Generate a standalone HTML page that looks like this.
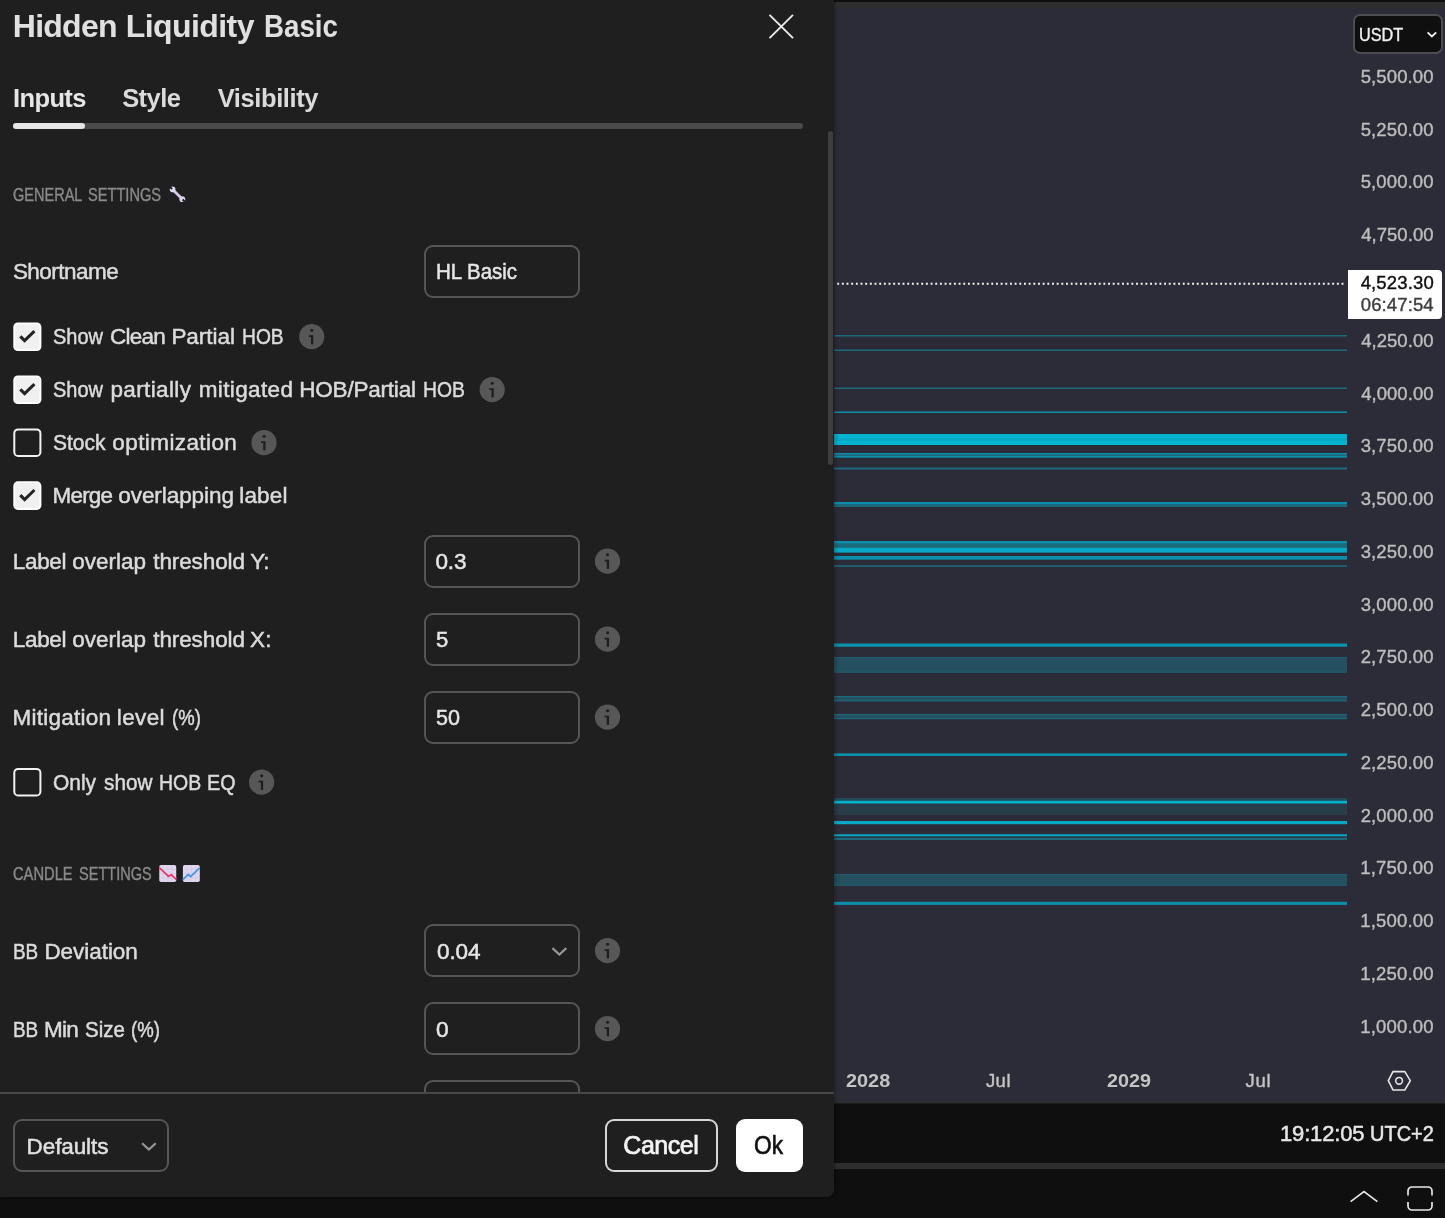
<!DOCTYPE html>
<html><head><meta charset="utf-8"><title>Hidden Liquidity Basic</title>
<style>
*{box-sizing:border-box;margin:0;padding:0}
html,body{width:1445px;height:1218px;overflow:hidden;background:#0f0f0f;font-family:"Liberation Sans",sans-serif;color:#dbdbdb}
.abs{position:absolute}
#page{will-change:transform;position:relative;width:1445px;height:1218px;overflow:hidden;background:#0f0f0f}
#topbar{left:834px;top:2px;width:611px;height:6px;background:#2e2e2e}
#chart{left:834px;top:8px;width:611px;height:1094px;background:#2c2c38}
#sep{left:834px;top:1163px;width:611px;height:6px;background:#2e2e2e}
.ln{position:absolute;left:834px;width:513px}
.pl{position:absolute;left:1361px;width:80px;font-size:18px;line-height:20px;color:#bdbdbd;white-space:nowrap;letter-spacing:.22px}
.tl{position:absolute;top:1070px;font-size:18px;line-height:22px;color:#c4c4c4;white-space:nowrap}
.tl.b{font-weight:bold}
#dlg{left:0;top:0;width:834px;height:1196.5px;background:#1f1f1f;border-bottom-right-radius:8px;overflow:hidden;box-shadow:1px 0 4px rgba(0,0,0,.35)}
.t{position:absolute;white-space:nowrap;line-height:1}
.lbl{color:#dbdbdb}
.sec{color:#808080}
.inp{position:absolute;left:424px;width:155.5px;height:53px;border:2px solid #555;border-radius:9px}
.inp .t{left:11px;top:14.2px;font-size:21px;color:#e0e0e0}
.cb{position:absolute;left:13px;width:28px;height:28px;border-radius:5px}
.cb.on{background:#f0f0f0}
.cb.off{border:2px solid #e6e6e6}
.cb svg{position:absolute;left:0;top:0}
.info{position:absolute;width:25px;height:25px}
</style></head><body>
<div id="page">
<div id="topbar" class="abs"></div>
<div id="chart" class="abs"></div>
<svg class="abs" style="left:834px;top:0" width="513" height="1103" viewBox="0 0 513 1103"><rect x="0" y="335" width="513" height="1.5" fill="#1d6a7d"/><rect x="0" y="349.5" width="513" height="1.5" fill="#1d6a7d"/><rect x="0" y="387.5" width="513" height="1.5" fill="#1d6a7d"/><rect x="0" y="411.5" width="513" height="1.5" fill="#0c8fab"/><rect x="0" y="434" width="513" height="11" fill="#00b4d0"/><rect x="0" y="438.5" width="513" height="2.5" fill="#05a9c5"/><rect x="0" y="453" width="513" height="4.5" fill="#1d6a7d"/><rect x="0" y="453" width="513" height="1.3" fill="#0c8fab"/><rect x="0" y="456" width="513" height="1.5" fill="#0c8fab"/><rect x="0" y="467.5" width="513" height="2.0" fill="#1d6a7d"/><rect x="0" y="502" width="513" height="5" fill="#1d6a7d"/><rect x="0" y="502" width="513" height="2" fill="#0c8fab"/><rect x="0" y="541" width="513" height="11.5" fill="#1b6b7e"/><rect x="0" y="541" width="513" height="2.3" fill="#0c8fab"/><rect x="0" y="547.8" width="513" height="4.7" fill="#06a8c6"/><rect x="0" y="556" width="513" height="3.7" fill="#0c8fab"/><rect x="0" y="565" width="513" height="2" fill="#1f5c6e"/><rect x="0" y="643.5" width="513" height="3.3" fill="#0c8fab"/><rect x="0" y="657" width="513" height="15.7" fill="#24505f"/><rect x="0" y="657" width="513" height="1.2" fill="#1f5c6e"/><rect x="0" y="671.5" width="513" height="1.2" fill="#1f5c6e"/><rect x="0" y="696" width="513" height="5.3" fill="#24505f"/><rect x="0" y="696" width="513" height="1.2" fill="#1d6a7d"/><rect x="0" y="700.2" width="513" height="1.1" fill="#1d6a7d"/><rect x="0" y="714" width="513" height="5.1" fill="#24505f"/><rect x="0" y="714" width="513" height="1.2" fill="#1d6a7d"/><rect x="0" y="718" width="513" height="1.1" fill="#1d6a7d"/><rect x="0" y="753.3" width="513" height="2.7" fill="#0c8fab"/><rect x="0" y="798" width="513" height="17" fill="#293c49"/><rect x="0" y="798" width="513" height="2.8" fill="#234a59"/><rect x="0" y="800.8" width="513" height="2.7" fill="#00b4d0"/><rect x="0" y="821" width="513" height="3.2" fill="#06a8c6"/><rect x="0" y="834.3" width="513" height="2.0" fill="#06a8c6"/><rect x="0" y="837.7" width="513" height="2.3" fill="#1d6a7d"/><rect x="0" y="874" width="513" height="11.8" fill="#24505f"/><rect x="0" y="874" width="513" height="1.2" fill="#1f5c6e"/><rect x="0" y="884.6" width="513" height="1.2" fill="#1f5c6e"/><rect x="0" y="901.8" width="513" height="3.1" fill="#0c8fab"/></svg>
<svg class="abs" style="left:834px;top:280px" width="514" height="8" viewBox="0 0 514 8"><path d="M3.2 3.75 H512" stroke="#f5f5f5" stroke-width="2" stroke-dasharray="1.9 2.77" fill="none"/></svg>
<span class="t" style="left:1360.71px;top:68.00px;font-size:18.5px;color:#bdbdbd;letter-spacing:0.116px;-webkit-text-stroke:0.4px #bdbdbd;">5,500.00</span>
<span class="t" style="left:1360.71px;top:121.00px;font-size:18.5px;color:#bdbdbd;letter-spacing:0.116px;-webkit-text-stroke:0.4px #bdbdbd;">5,250.00</span>
<span class="t" style="left:1360.71px;top:173.00px;font-size:18.5px;color:#bdbdbd;letter-spacing:0.116px;-webkit-text-stroke:0.4px #bdbdbd;">5,000.00</span>
<span class="t" style="left:1361.13px;top:226.00px;font-size:18.5px;color:#bdbdbd;letter-spacing:0.056px;-webkit-text-stroke:0.4px #bdbdbd;">4,750.00</span>
<span class="t" style="left:1361.13px;top:332.00px;font-size:18.5px;color:#bdbdbd;letter-spacing:0.056px;-webkit-text-stroke:0.4px #bdbdbd;">4,250.00</span>
<span class="t" style="left:1361.13px;top:385.00px;font-size:18.5px;color:#bdbdbd;letter-spacing:0.056px;-webkit-text-stroke:0.4px #bdbdbd;">4,000.00</span>
<span class="t" style="left:1360.71px;top:437.00px;font-size:18.5px;color:#bdbdbd;letter-spacing:0.116px;-webkit-text-stroke:0.4px #bdbdbd;">3,750.00</span>
<span class="t" style="left:1360.71px;top:490.00px;font-size:18.5px;color:#bdbdbd;letter-spacing:0.116px;-webkit-text-stroke:0.4px #bdbdbd;">3,500.00</span>
<span class="t" style="left:1360.71px;top:543.00px;font-size:18.5px;color:#bdbdbd;letter-spacing:0.116px;-webkit-text-stroke:0.4px #bdbdbd;">3,250.00</span>
<span class="t" style="left:1360.71px;top:596.00px;font-size:18.5px;color:#bdbdbd;letter-spacing:0.116px;-webkit-text-stroke:0.4px #bdbdbd;">3,000.00</span>
<span class="t" style="left:1360.71px;top:648.00px;font-size:18.5px;color:#bdbdbd;letter-spacing:0.117px;-webkit-text-stroke:0.4px #bdbdbd;">2,750.00</span>
<span class="t" style="left:1360.71px;top:701.00px;font-size:18.5px;color:#bdbdbd;letter-spacing:0.117px;-webkit-text-stroke:0.4px #bdbdbd;">2,500.00</span>
<span class="t" style="left:1360.71px;top:754.00px;font-size:18.5px;color:#bdbdbd;letter-spacing:0.117px;-webkit-text-stroke:0.4px #bdbdbd;">2,250.00</span>
<span class="t" style="left:1360.71px;top:807.00px;font-size:18.5px;color:#bdbdbd;letter-spacing:0.117px;-webkit-text-stroke:0.4px #bdbdbd;">2,000.00</span>
<span class="t" style="left:1360.18px;top:859.00px;font-size:18.5px;color:#bdbdbd;letter-spacing:0.192px;-webkit-text-stroke:0.4px #bdbdbd;">1,750.00</span>
<span class="t" style="left:1360.18px;top:912.00px;font-size:18.5px;color:#bdbdbd;letter-spacing:0.192px;-webkit-text-stroke:0.4px #bdbdbd;">1,500.00</span>
<span class="t" style="left:1360.18px;top:965.00px;font-size:18.5px;color:#bdbdbd;letter-spacing:0.192px;-webkit-text-stroke:0.4px #bdbdbd;">1,250.00</span>
<span class="t" style="left:1360.18px;top:1018.00px;font-size:18.5px;color:#bdbdbd;letter-spacing:0.192px;-webkit-text-stroke:0.4px #bdbdbd;">1,000.00</span>
<div class="abs" style="left:1353px;top:14px;width:90px;height:40px;background:#0f0f0f;border:2px solid #4d4d50;border-radius:7px"></div>
<span class="t" style="left:1358.53px;top:26.00px;font-size:18.5px;color:#f0f0f0;transform-origin:0 50%;transform:scaleX(0.8755);-webkit-text-stroke:0.4px #f0f0f0;">USDT</span>
<svg class="abs" style="left:1425px;top:29px" width="14" height="11" viewBox="0 0 14 11"><path d="M2.6 3.4 L6.9 7.4 L11.2 3.4" fill="none" stroke="#f0f0f0" stroke-width="1.9"/></svg>
<div class="abs" style="left:1348px;top:270px;width:94px;height:49px;background:#fff;border-radius:0 4px 4px 0"></div>
<span class="t" style="left:1360.63px;top:274.00px;font-size:18.5px;color:#0f0f0f;letter-spacing:0.156px;-webkit-text-stroke:0.4px #0f0f0f;">4,523.30</span>
<span class="t" style="left:1360.76px;top:296.00px;font-size:18.5px;color:#3d3d3d;letter-spacing:0.117px;-webkit-text-stroke:0.4px #3d3d3d;">06:47:54</span>
<span class="t" style="left:846.41px;top:1072.00px;font-size:18.5px;color:#c4c4c4;font-weight:bold;transform-origin:0 50%;transform:scaleX(1.0741);">2028</span>
<span class="t" style="left:985.89px;top:1072.00px;font-size:18.5px;color:#c4c4c4;letter-spacing:0.483px;-webkit-text-stroke:0.4px #c4c4c4;">Jul</span>
<span class="t" style="left:1106.51px;top:1072.00px;font-size:18.5px;color:#c4c4c4;font-weight:bold;transform-origin:0 50%;transform:scaleX(1.0686);">2029</span>
<span class="t" style="left:1245.39px;top:1072.00px;font-size:18.5px;color:#c4c4c4;letter-spacing:0.783px;-webkit-text-stroke:0.4px #c4c4c4;">Jul</span>
<svg class="abs" style="left:1385px;top:1068px" width="28" height="26" viewBox="0 0 28 26"><path d="M3.3 12.7 L8 3.6 H19.8 L25.3 12.7 L19.8 21.9 H8 Z" fill="none" stroke="#e6e6e6" stroke-width="1.55" stroke-linejoin="miter"/><circle cx="14.1" cy="12.75" r="3.35" fill="none" stroke="#e6e6e6" stroke-width="1.55"/></svg>
<div class="abs" style="left:834px;top:1102px;width:611px;height:116px;background:#0f0f0f"></div>
<svg class="abs" style="left:834px;top:1100px" width="611" height="6" viewBox="0 0 611 6"><rect x="0" y="1.9" width="611" height="1.5" fill="#2e2e2e"/></svg>
<div id="sep" class="abs"></div>
<span class="t" style="left:1279.97px;top:1123.00px;font-size:22px;color:#e6e6e6;letter-spacing:-0.146px;-webkit-text-stroke:0.5px #e6e6e6;">19:12:05</span> <span class="t" style="left:1370.37px;top:1123.00px;font-size:22px;color:#e6e6e6;transform-origin:0 50%;transform:scaleX(0.9090);-webkit-text-stroke:0.5px #e6e6e6;">UTC+2</span>
<svg class="abs" style="left:1346px;top:1184px" width="36" height="24" viewBox="0 0 36 24"><path d="M4.6 17.6 L18 7.6 L31.4 17.6" fill="none" stroke="#e6e6e6" stroke-width="1.6"/></svg>
<svg class="abs" style="left:1404px;top:1183px" width="32" height="30" viewBox="0 0 32 30"><path d="M4 12.5 V8 a4 4 0 0 1 4-4 H24 a4 4 0 0 1 4 4 V12.5 M4 19 V23 a4 4 0 0 0 4 4 H24 a4 4 0 0 0 4 -4 V19" fill="none" stroke="#e6e6e6" stroke-width="1.7"/></svg>
<div id="dlg" class="abs">
<span class="t" style="left:12.84px;top:10.00px;font-size:32px;color:#e0e0e0;font-weight:bold;letter-spacing:-0.758px;">Hidden</span> <span class="t" style="left:125.74px;top:10.00px;font-size:32px;color:#e0e0e0;font-weight:bold;letter-spacing:-0.567px;">Liquidity</span> <span class="t" style="left:264.13px;top:10.00px;font-size:32px;color:#e0e0e0;font-weight:bold;transform-origin:0 50%;transform:scaleX(0.8663);">Basic</span>
<svg class="abs" style="left:765px;top:10px" width="32" height="32" viewBox="0 0 32 32"><path d="M4.5 4.8 L28 28.2 M28 4.8 L4.5 28.2" fill="none" stroke="#ebebeb" stroke-width="1.9"/></svg>
<span class="t" style="left:13.09px;top:86.00px;font-size:25.5px;color:#e6e6e6;font-weight:bold;letter-spacing:-0.645px;">Inputs</span>
<span class="t" style="left:122.20px;top:86.00px;font-size:25.5px;color:#dbdbdb;font-weight:bold;letter-spacing:-0.575px;">Style</span>
<span class="t" style="left:217.73px;top:86.00px;font-size:25.5px;color:#dbdbdb;font-weight:bold;letter-spacing:-0.403px;">Visibility</span>
<div class="abs" style="left:13px;top:123px;width:790px;height:6px;border-radius:3px;background:#4a4a4a"></div>
<div class="abs" style="left:13px;top:123px;width:72px;height:6px;border-radius:3px;background:#e6e6e6"></div>
<div class="abs" style="left:828px;top:131px;width:5px;height:334px;border-radius:2.5px;background:#3d3d3d"></div>
<span class="t" style="left:13.12px;top:186.00px;font-size:18.5px;color:#8a8a8a;transform-origin:0 50%;transform:scaleX(0.7850);-webkit-text-stroke:0.4px #8a8a8a;">GENERAL</span> <span class="t" style="left:88.02px;top:186.00px;font-size:18.5px;color:#8a8a8a;transform-origin:0 50%;transform:scaleX(0.7897);-webkit-text-stroke:0.4px #8a8a8a;">SETTINGS</span>
<svg class="abs" style="left:168px;top:184px" width="21" height="21" viewBox="0 0 21 21"><g transform="translate(0.00 0.00)"><g stroke-linecap="butt"><path d="M4.4 5.3 L14.4 15.3" stroke="#d6c9ee" stroke-width="2.7"/><circle cx="4.6" cy="5.4" r="2.8" fill="#e3daf3"/><circle cx="14.3" cy="15.2" r="2.9" fill="#dcd0f0"/><path d="M4.1 5 L0.5 1.4" stroke="#1f1f1f" stroke-width="2"/><path d="M14.6 15.5 L18.2 19.1" stroke="#1f1f1f" stroke-width="2"/></g></g></svg>
<span class="t" style="left:12.89px;top:261.00px;font-size:22.5px;color:#dbdbdb;letter-spacing:-0.536px;-webkit-text-stroke:0.5px #dbdbdb;">Shortname</span>
<div class="inp" style="top:245px"></div>
<span class="t" style="left:435.62px;top:261.00px;font-size:22.5px;color:#e6e6e6;transform-origin:0 50%;transform:scaleX(0.9154);-webkit-text-stroke:0.5px #e6e6e6;">HL</span> <span class="t" style="left:467.03px;top:261.00px;font-size:22.5px;color:#e6e6e6;transform-origin:0 50%;transform:scaleX(0.9090);-webkit-text-stroke:0.5px #e6e6e6;">Basic</span>
<svg class="abs" style="left:12px;top:320px" width="33" height="34" viewBox="0 0 33 34"><g transform="translate(0.00 0.70)"><rect x="1.3" y="1.7" width="28.1" height="28.6" rx="4.6" fill="#fff"/><rect x="3.1" y="3.5" width="24.5" height="25" rx="3" fill="#f0f0f0"/><path d="M8.3 15.6 L12.6 19.9 L22.4 10.4" fill="none" stroke="#242424" stroke-width="3.1"/></g></svg>
<span class="t" style="left:53.11px;top:326.00px;font-size:22.5px;color:#dbdbdb;transform-origin:0 50%;transform:scaleX(0.8884);-webkit-text-stroke:0.5px #dbdbdb;">Show</span> <span class="t" style="left:110.08px;top:326.00px;font-size:22.5px;color:#dbdbdb;letter-spacing:-0.782px;-webkit-text-stroke:0.5px #dbdbdb;">Clean</span> <span class="t" style="left:171.39px;top:326.00px;font-size:22.5px;color:#dbdbdb;letter-spacing:-0.018px;-webkit-text-stroke:0.5px #dbdbdb;">Partial</span> <span class="t" style="left:242.11px;top:326.00px;font-size:22.5px;color:#dbdbdb;transform-origin:0 50%;transform:scaleX(0.8542);-webkit-text-stroke:0.5px #dbdbdb;">HOB</span>
<svg class="abs" style="left:298px;top:323px" width="27" height="27" viewBox="0 0 27 27"><g transform="translate(0.70 0.70)"><circle cx="13" cy="13" r="12.6" fill="#575757"/><circle cx="13.1" cy="6.5" r="1.55" fill="#1f1f1f"/><rect x="12.25" y="11.5" width="2.3" height="9.2" fill="#1f1f1f"/><rect x="10.1" y="11.5" width="2.3" height="1.8" fill="#1f1f1f"/></g></svg>
<svg class="abs" style="left:12px;top:373px" width="33" height="34" viewBox="0 0 33 34"><g transform="translate(0.00 0.70)"><rect x="1.3" y="1.7" width="28.1" height="28.6" rx="4.6" fill="#fff"/><rect x="3.1" y="3.5" width="24.5" height="25" rx="3" fill="#f0f0f0"/><path d="M8.3 15.6 L12.6 19.9 L22.4 10.4" fill="none" stroke="#242424" stroke-width="3.1"/></g></svg>
<span class="t" style="left:53.11px;top:379.00px;font-size:22.5px;color:#dbdbdb;transform-origin:0 50%;transform:scaleX(0.8884);-webkit-text-stroke:0.5px #dbdbdb;">Show</span> <span class="t" style="left:110.38px;top:379.00px;font-size:22.5px;color:#dbdbdb;letter-spacing:0.387px;-webkit-text-stroke:0.5px #dbdbdb;">partially</span> <span class="t" style="left:198.65px;top:379.00px;font-size:22.5px;color:#dbdbdb;letter-spacing:0.382px;-webkit-text-stroke:0.5px #dbdbdb;">mitigated</span> <span class="t" style="left:299.29px;top:379.00px;font-size:22.5px;color:#dbdbdb;letter-spacing:-0.211px;-webkit-text-stroke:0.5px #dbdbdb;">HOB/Partial</span> <span class="t" style="left:423.00px;top:379.00px;font-size:22.5px;color:#dbdbdb;transform-origin:0 50%;transform:scaleX(0.8607);-webkit-text-stroke:0.5px #dbdbdb;">HOB</span>
<svg class="abs" style="left:479px;top:376px" width="27" height="27" viewBox="0 0 27 27"><g transform="translate(0.20 0.70)"><circle cx="13" cy="13" r="12.6" fill="#575757"/><circle cx="13.1" cy="6.5" r="1.55" fill="#1f1f1f"/><rect x="12.25" y="11.5" width="2.3" height="9.2" fill="#1f1f1f"/><rect x="10.1" y="11.5" width="2.3" height="1.8" fill="#1f1f1f"/></g></svg>
<svg class="abs" style="left:12px;top:426px" width="33" height="34" viewBox="0 0 33 34"><g transform="translate(0.00 0.70)"><rect x="2.3" y="2.7" width="26.1" height="26.6" rx="3.8" fill="none" stroke="#f2f2f2" stroke-width="2"/></g></svg>
<span class="t" style="left:52.96px;top:432.00px;font-size:22.5px;color:#dbdbdb;transform-origin:0 50%;transform:scaleX(0.9338);-webkit-text-stroke:0.5px #dbdbdb;">Stock</span> <span class="t" style="left:112.36px;top:432.00px;font-size:22.5px;color:#dbdbdb;letter-spacing:0.404px;-webkit-text-stroke:0.5px #dbdbdb;">optimization</span>
<svg class="abs" style="left:251px;top:429px" width="27" height="27" viewBox="0 0 27 27"><g transform="translate(0.00 0.70)"><circle cx="13" cy="13" r="12.6" fill="#575757"/><circle cx="13.1" cy="6.5" r="1.55" fill="#1f1f1f"/><rect x="12.25" y="11.5" width="2.3" height="9.2" fill="#1f1f1f"/><rect x="10.1" y="11.5" width="2.3" height="1.8" fill="#1f1f1f"/></g></svg>
<svg class="abs" style="left:12px;top:479px" width="33" height="34" viewBox="0 0 33 34"><g transform="translate(0.00 0.60)"><rect x="1.3" y="1.7" width="28.1" height="28.6" rx="4.6" fill="#fff"/><rect x="3.1" y="3.5" width="24.5" height="25" rx="3" fill="#f0f0f0"/><path d="M8.3 15.6 L12.6 19.9 L22.4 10.4" fill="none" stroke="#242424" stroke-width="3.1"/></g></svg>
<span class="t" style="left:52.49px;top:485.00px;font-size:22.5px;color:#dbdbdb;letter-spacing:-0.801px;-webkit-text-stroke:0.5px #dbdbdb;">Merge</span> <span class="t" style="left:118.26px;top:485.00px;font-size:22.5px;color:#dbdbdb;letter-spacing:-0.066px;-webkit-text-stroke:0.5px #dbdbdb;">overlapping</span> <span class="t" style="left:239.16px;top:485.00px;font-size:22.5px;color:#dbdbdb;letter-spacing:0.222px;-webkit-text-stroke:0.5px #dbdbdb;">label</span>
<span class="t" style="left:12.79px;top:551.00px;font-size:22.5px;color:#dbdbdb;letter-spacing:-0.341px;-webkit-text-stroke:0.5px #dbdbdb;">Label</span> <span class="t" style="left:72.36px;top:551.00px;font-size:22.5px;color:#dbdbdb;letter-spacing:-0.021px;-webkit-text-stroke:0.5px #dbdbdb;">overlap</span> <span class="t" style="left:153.25px;top:551.00px;font-size:22.5px;color:#dbdbdb;letter-spacing:-0.104px;-webkit-text-stroke:0.5px #dbdbdb;">threshold</span> <span class="t" style="left:250.16px;top:551.00px;font-size:22.5px;color:#dbdbdb;letter-spacing:-0.557px;-webkit-text-stroke:0.5px #dbdbdb;">Y:</span>
<div class="inp" style="top:535px"></div>
<span class="t" style="left:435.40px;top:551.00px;font-size:22.5px;color:#e6e6e6;letter-spacing:-0.050px;-webkit-text-stroke:0.5px #e6e6e6;">0.3</span>
<svg class="abs" style="left:594px;top:548px" width="27" height="27" viewBox="0 0 27 27"><g transform="translate(0.50 0.20)"><circle cx="13" cy="13" r="12.6" fill="#575757"/><circle cx="13.1" cy="6.5" r="1.55" fill="#1f1f1f"/><rect x="12.25" y="11.5" width="2.3" height="9.2" fill="#1f1f1f"/><rect x="10.1" y="11.5" width="2.3" height="1.8" fill="#1f1f1f"/></g></svg>
<span class="t" style="left:12.79px;top:629.00px;font-size:22.5px;color:#dbdbdb;letter-spacing:-0.341px;-webkit-text-stroke:0.5px #dbdbdb;">Label</span> <span class="t" style="left:72.36px;top:629.00px;font-size:22.5px;color:#dbdbdb;letter-spacing:-0.021px;-webkit-text-stroke:0.5px #dbdbdb;">overlap</span> <span class="t" style="left:153.25px;top:629.00px;font-size:22.5px;color:#dbdbdb;letter-spacing:-0.104px;-webkit-text-stroke:0.5px #dbdbdb;">threshold</span> <span class="t" style="left:250.11px;top:629.00px;font-size:22.5px;color:#dbdbdb;letter-spacing:0.029px;-webkit-text-stroke:0.5px #dbdbdb;">X:</span>
<div class="inp" style="top:613px"></div>
<span class="t" style="left:435.79px;top:629.00px;font-size:22.5px;color:#e6e6e6;transform-origin:0 50%;transform:scaleX(0.9804);-webkit-text-stroke:0.5px #e6e6e6;">5</span>
<svg class="abs" style="left:594px;top:626px" width="27" height="27" viewBox="0 0 27 27"><g transform="translate(0.50 0.20)"><circle cx="13" cy="13" r="12.6" fill="#575757"/><circle cx="13.1" cy="6.5" r="1.55" fill="#1f1f1f"/><rect x="12.25" y="11.5" width="2.3" height="9.2" fill="#1f1f1f"/><rect x="10.1" y="11.5" width="2.3" height="1.8" fill="#1f1f1f"/></g></svg>
<span class="t" style="left:12.39px;top:707.00px;font-size:22.5px;color:#dbdbdb;letter-spacing:0.267px;-webkit-text-stroke:0.5px #dbdbdb;">Mitigation</span> <span class="t" style="left:116.86px;top:707.00px;font-size:22.5px;color:#dbdbdb;letter-spacing:0.361px;-webkit-text-stroke:0.5px #dbdbdb;">level</span> <span class="t" style="left:172.29px;top:707.00px;font-size:22.5px;color:#dbdbdb;transform-origin:0 50%;transform:scaleX(0.8235);-webkit-text-stroke:0.5px #dbdbdb;">(%)</span>
<div class="inp" style="top:691px"></div>
<span class="t" style="left:435.81px;top:707.00px;font-size:22.5px;color:#e6e6e6;transform-origin:0 50%;transform:scaleX(0.9576);-webkit-text-stroke:0.5px #e6e6e6;">50</span>
<svg class="abs" style="left:594px;top:704px" width="27" height="27" viewBox="0 0 27 27"><g transform="translate(0.50 0.20)"><circle cx="13" cy="13" r="12.6" fill="#575757"/><circle cx="13.1" cy="6.5" r="1.55" fill="#1f1f1f"/><rect x="12.25" y="11.5" width="2.3" height="9.2" fill="#1f1f1f"/><rect x="10.1" y="11.5" width="2.3" height="1.8" fill="#1f1f1f"/></g></svg>
<svg class="abs" style="left:12px;top:766px" width="33" height="34" viewBox="0 0 33 34"><g transform="translate(0.00 0.20)"><rect x="2.3" y="2.7" width="26.1" height="26.6" rx="3.8" fill="none" stroke="#f2f2f2" stroke-width="2"/></g></svg>
<span class="t" style="left:53.47px;top:772.00px;font-size:22.5px;color:#dbdbdb;transform-origin:0 50%;transform:scaleX(0.9294);-webkit-text-stroke:0.5px #dbdbdb;">Only</span> <span class="t" style="left:103.93px;top:772.00px;font-size:22.5px;color:#dbdbdb;transform-origin:0 50%;transform:scaleX(0.9230);-webkit-text-stroke:0.5px #dbdbdb;">show</span> <span class="t" style="left:158.60px;top:772.00px;font-size:22.5px;color:#dbdbdb;transform-origin:0 50%;transform:scaleX(0.8650);-webkit-text-stroke:0.5px #dbdbdb;">HOB</span> <span class="t" style="left:206.88px;top:772.00px;font-size:22.5px;color:#dbdbdb;transform-origin:0 50%;transform:scaleX(0.8749);-webkit-text-stroke:0.5px #dbdbdb;">EQ</span>
<svg class="abs" style="left:248px;top:769px" width="27" height="27" viewBox="0 0 27 27"><g transform="translate(0.60 0.20)"><circle cx="13" cy="13" r="12.6" fill="#575757"/><circle cx="13.1" cy="6.5" r="1.55" fill="#1f1f1f"/><rect x="12.25" y="11.5" width="2.3" height="9.2" fill="#1f1f1f"/><rect x="10.1" y="11.5" width="2.3" height="1.8" fill="#1f1f1f"/></g></svg>
<span class="t" style="left:13.42px;top:865.00px;font-size:18.5px;color:#8a8a8a;transform-origin:0 50%;transform:scaleX(0.7948);-webkit-text-stroke:0.4px #8a8a8a;">CANDLE</span> <span class="t" style="left:78.53px;top:865.00px;font-size:18.5px;color:#8a8a8a;transform-origin:0 50%;transform:scaleX(0.7853);-webkit-text-stroke:0.4px #8a8a8a;">SETTINGS</span>
<svg class="abs" style="left:159px;top:865px" width="19" height="19" viewBox="0 0 19 19"><g transform="translate(0.30 0.00)"><rect x="0" y="0" width="16.9" height="17" rx="1.8" fill="#e1d6ee"/><path d="M4.2 0V17M8.4 0V17M12.6 0V17M0 4.2H17M0 8.5H17M0 12.7H17" stroke="#d3c7e4" stroke-width=".7"/><path d="M0 2.7 L9.2 11.4 L11.9 9.7 L16.9 14.3" fill="none" stroke="#f0305f" stroke-width="1.7" stroke-linejoin="round"/></g></svg>
<svg class="abs" style="left:182px;top:865px" width="19" height="19" viewBox="0 0 19 19"><g transform="translate(0.90 0.00)"><rect x="0" y="0" width="16.9" height="17" rx="1.8" fill="#e1d6ee"/><path d="M4.2 0V17M8.4 0V17M12.6 0V17M0 4.2H17M0 8.5H17M0 12.7H17" stroke="#d3c7e4" stroke-width=".7"/><path d="M-0.2 14.9 L5.2 9.5 L7.7 11.6 L16.8 2.8" fill="none" stroke="#3a98e6" stroke-width="1.7" stroke-linejoin="round"/></g></svg>
<span class="t" style="left:13.13px;top:941.00px;font-size:22.5px;color:#dbdbdb;transform-origin:0 50%;transform:scaleX(0.8406);-webkit-text-stroke:0.5px #dbdbdb;">BB</span> <span class="t" style="left:44.39px;top:941.00px;font-size:22.5px;color:#dbdbdb;letter-spacing:-0.043px;-webkit-text-stroke:0.5px #dbdbdb;">Deviation</span>
<div class="inp" style="top:924px"><svg class="abs" style="left:122px;top:16px" width="24" height="20" viewBox="0 0 24 20"><path d="M4.4 6.1 L11.4 12.5 L18.3 6.1" fill="none" stroke="#969696" stroke-width="2.2"/></svg></div>
<span class="t" style="left:437.00px;top:941.00px;font-size:22.5px;color:#e6e6e6;letter-spacing:-0.110px;-webkit-text-stroke:0.5px #e6e6e6;">0.04</span>
<svg class="abs" style="left:594px;top:937px" width="27" height="27" viewBox="0 0 27 27"><g transform="translate(0.50 0.70)"><circle cx="13" cy="13" r="12.6" fill="#575757"/><circle cx="13.1" cy="6.5" r="1.55" fill="#1f1f1f"/><rect x="12.25" y="11.5" width="2.3" height="9.2" fill="#1f1f1f"/><rect x="10.1" y="11.5" width="2.3" height="1.8" fill="#1f1f1f"/></g></svg>
<span class="t" style="left:13.13px;top:1019.00px;font-size:22.5px;color:#dbdbdb;transform-origin:0 50%;transform:scaleX(0.8406);-webkit-text-stroke:0.5px #dbdbdb;">BB</span> <span class="t" style="left:43.89px;top:1019.00px;font-size:22.5px;color:#dbdbdb;letter-spacing:-0.647px;-webkit-text-stroke:0.5px #dbdbdb;">Min</span> <span class="t" style="left:84.69px;top:1019.00px;font-size:22.5px;color:#dbdbdb;transform-origin:0 50%;transform:scaleX(0.9088);-webkit-text-stroke:0.5px #dbdbdb;">Size</span> <span class="t" style="left:131.29px;top:1019.00px;font-size:22.5px;color:#dbdbdb;transform-origin:0 50%;transform:scaleX(0.8265);-webkit-text-stroke:0.5px #dbdbdb;">(%)</span>
<div class="inp" style="top:1002px"></div>
<span class="t" style="left:435.50px;top:1019.00px;font-size:22.5px;color:#e6e6e6;transform-origin:0 50%;transform:scaleX(1.0093);-webkit-text-stroke:0.5px #e6e6e6;">0</span>
<svg class="abs" style="left:594px;top:1015px" width="27" height="27" viewBox="0 0 27 27"><g transform="translate(0.50 0.70)"><circle cx="13" cy="13" r="12.6" fill="#575757"/><circle cx="13.1" cy="6.5" r="1.55" fill="#1f1f1f"/><rect x="12.25" y="11.5" width="2.3" height="9.2" fill="#1f1f1f"/><rect x="10.1" y="11.5" width="2.3" height="1.8" fill="#1f1f1f"/></g></svg>
<div class="inp" style="top:1080px"></div>
<div class="abs" style="left:0;top:1092px;width:834px;height:105px;background:#1f1f1f;border-top:2px solid #484848"></div>
<div class="abs" style="left:13px;top:1119px;width:156px;height:53px;border:2px solid #555;border-radius:9px"></div>
<span class="t" style="left:26.59px;top:1136.00px;font-size:22.5px;color:#e0e0e0;letter-spacing:-0.100px;-webkit-text-stroke:0.5px #e0e0e0;">Defaults</span>
<svg class="abs" style="left:136px;top:1136px" width="24" height="20" viewBox="0 0 24 20"><path d="M6.1 7.2 L12.9 13.6 L19.7 7.2" fill="none" stroke="#969696" stroke-width="2.2"/></svg>
<div class="abs" style="left:605px;top:1119px;width:113px;height:53px;border:2px solid #d6d6d6;border-radius:9px"></div>
<span class="t" style="left:623.28px;top:1133.00px;font-size:25px;color:#f5f5f5;letter-spacing:-0.442px;-webkit-text-stroke:0.7px #f5f5f5;">Cancel</span>
<div class="abs" style="left:736px;top:1119px;width:67px;height:53px;background:#fff;border-radius:9px"></div>
<span class="t" style="left:754.38px;top:1133.00px;font-size:25px;color:#0f0f0f;transform-origin:0 50%;transform:scaleX(0.9069);-webkit-text-stroke:0.6px #0f0f0f;">Ok</span>
</div>
</div>
</body></html>
